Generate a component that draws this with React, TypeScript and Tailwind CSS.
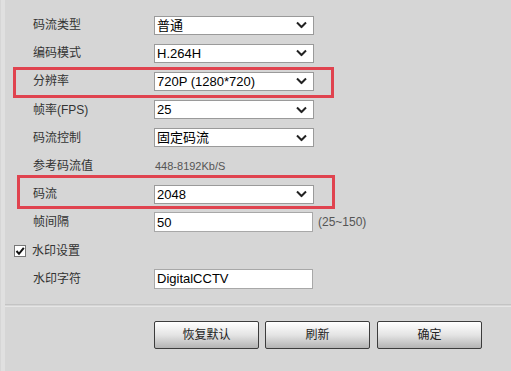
import React from "react";

const font = { fontFamily: '"Liberation Sans", "Noto Sans CJK SC", sans-serif' };

function Chevron() {
  return (
    <svg width="11" height="7" viewBox="0 0 11 7" className="absolute right-[6px] top-1/2 -translate-y-1/2">
      <path d="M1 1 L5.5 5.5 L10 1" fill="none" stroke="#222" strokeWidth="2" />
    </svg>
  );
}

function Select({ value }: { value: string }) {
  return (
    <div className="relative w-[160px] h-[19px] bg-white border border-[#9a9a9a] flex items-center pl-[2px] text-[13px] text-black leading-none">
      {value}
      <Chevron />
    </div>
  );
}

function Input({ value }: { value: string }) {
  return (
    <div className="w-[159px] h-[20px] bg-white border border-[#a8a8a8] flex items-center pl-[2px] text-[13px] text-black leading-none">
      {value}
    </div>
  );
}

function Row({ label, children, box }: { label: React.ReactNode; children?: React.ReactNode; box?: React.ReactNode }) {
  return (
    <div className="relative h-[28.2px] flex items-center">
      {box}
      <div className="w-[153px] pl-[32px] text-[12px] text-[#333] shrink-0">{label}</div>
      {children}
    </div>
  );
}

function Btn({ text }: { text: string }) {
  return (
    <div className="w-[105px] h-[28px] rounded-[2px] border border-[#3c3c3c] bg-gradient-to-b from-[#ffffff] via-[#e4e4e4] to-[#b4b4b4] flex items-center justify-center text-[12px] text-[#222]">
      {text}
    </div>
  );
}

export default function App() {
  return (
    <div style={font} className="w-[511px] h-[371px] bg-[#d6d6d6] relative overflow-hidden">
      <div className="absolute left-[1px] top-0 bottom-0 w-[4px] bg-[#e0e0e0]" />
      <div className="relative pt-[11px] pl-[1px]">
        <Row label="码流类型"><Select value="普通" /></Row>
        <Row label="编码模式"><Select value="H.264H" /></Row>
        <Row
          label="分辨率"
          box={<div className="absolute left-[12px] top-0 w-[321px] h-[31px] border-[3px] border-[#e0434f]" />}
        >
          <Select value="720P (1280*720)" />
        </Row>
        <Row label="帧率(FPS)"><Select value="25" /></Row>
        <Row label="码流控制"><Select value="固定码流" /></Row>
        <Row label="参考码流值">
          <span className="pl-[1px] text-[11px] text-[#555]">448-8192Kb/S</span>
        </Row>
        <Row
          label="码流"
          box={<div className="absolute left-[16px] top-[-5px] w-[318px] h-[34px] border-[3px] border-[#e0434f]" />}
        >
          <Select value="2048" />
        </Row>
        <Row label="帧间隔">
          <Input value="50" />
          <span className="ml-[5px] text-[12px] text-[#555]">(25~150)</span>
        </Row>
        <div className="h-[28.2px] flex items-center pl-[13px]">
          <div className="w-[12px] h-[12px] bg-white border border-[#777] flex items-center justify-center">
            <svg width="10" height="10" viewBox="0 0 10 10">
              <path d="M1.5 5 L4 7.8 L8.8 1.8" fill="none" stroke="#111" strokeWidth="2" />
            </svg>
          </div>
          <span className="ml-[6px] text-[12px] text-[#333]">水印设置</span>
        </div>
        <Row label="水印字符"><Input value="DigitalCCTV" /></Row>
      </div>
      <div className="absolute left-[5px] right-0 top-[304px] h-[1px] bg-[#c4c4c4]" />
      <div className="absolute left-[5px] right-0 top-[306px] h-[1px] bg-[#e6e6e6]" />
      <div className="absolute top-[321px] left-[154px] flex gap-[6px]">
        <Btn text="恢复默认" />
        <Btn text="刷新" />
        <div className="ml-[1px]"><Btn text="确定" /></div>
      </div>
    </div>
  );
}
